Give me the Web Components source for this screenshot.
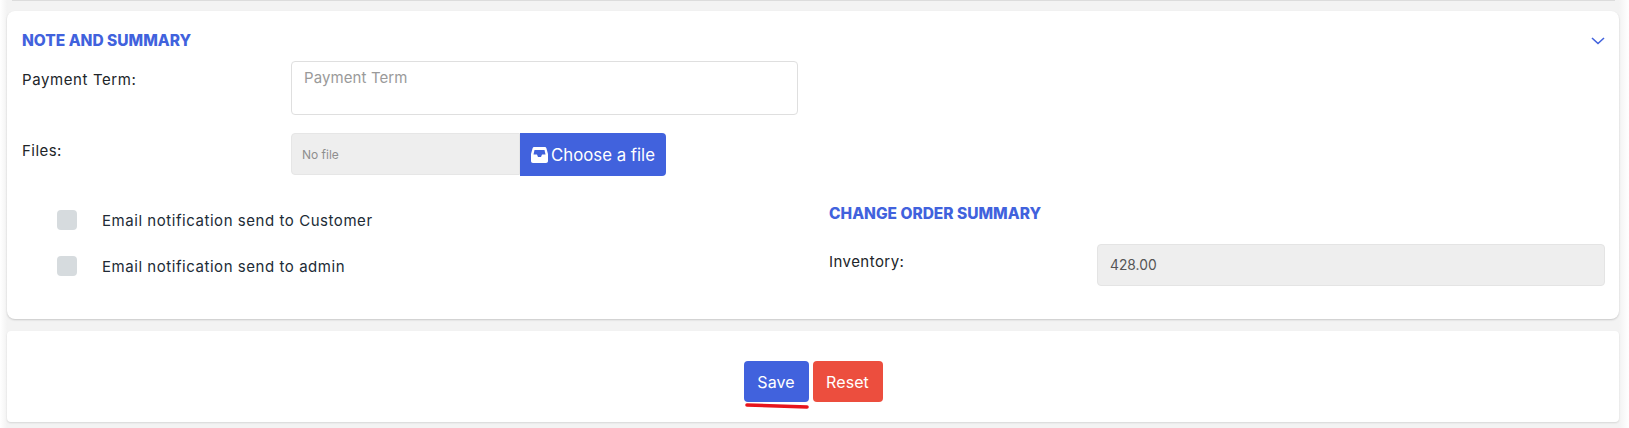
<!DOCTYPE html>
<html>
<head>
<meta charset="utf-8">
<style>
  html, body { margin: 0; height: 428px; overflow: hidden; background: #f3f3f3; }
  body { font-family: Inter, "Open Sans", sans-serif; color: #212529; }
</style>
</head>
<body>
<order-page>
  <note-card>
    <form-row slot="left" label="Payment Term:" style="--label-top:9px;--label-spacing:0.6px"><text-box placeholder="Payment Term"></text-box></form-row>
    <form-row slot="left" label="Files:"><file-pick></file-pick></form-row>
    <check-row slot="checks" label="Email notification send to Customer"></check-row>
    <check-row slot="checks" label="Email notification send to admin"></check-row>
    <form-row slot="summary" label="Inventory:" style="--label-col:268px"><read-box value="428.00"></read-box></form-row>
  </note-card>
  <action-bar></action-bar>
</order-page>

<script>
class OrderPage extends HTMLElement {
    connectedCallback() {
        this.attachShadow({ mode: 'open' }).innerHTML = `
            <style>
                :host {
                    display: block;
                    height: 428px;
                    padding: 0 10px 0 7px;
                    box-sizing: border-box;
                    background: linear-gradient(90deg, #fff 0, #f3f3f3 7px, #f3f3f3 calc(100% - 10px), #fff 100%);
                }
                .top-edge {
                    height: 1px;
                    margin: 0 4px 10px 5px;
                    background: #dcdcdc;
                }
            </style>
            <div class="top-edge"></div>
            <slot></slot>
        `;
    }
}

class NoteCard extends HTMLElement {
    connectedCallback() {
        this.attachShadow({ mode: 'open' }).innerHTML = `
            <style>
                :host {
                    display: block;
                    height: 308px;
                    padding: 20px 14px 0 15px;
                    box-sizing: border-box;
                    background: #fff;
                    border-radius: 8px;
                    box-shadow: 0 1px 2px rgba(0, 0, 0, 0.18);
                }
                .head {
                    display: flex;
                    justify-content: space-between;
                    align-items: center;
                    height: 20px;
                    margin-bottom: 10px;
                }
                h3 {
                    margin: 0;
                    font-size: 15.5px;
                    font-weight: 800;
                    color: #4162dd;
                    line-height: 20px;
                }
                svg { display: block; }
                .left { display: flex; flex-direction: column; gap: 18px; width: 776px; }
                .lower {
                    display: grid;
                    grid-template-columns: 775px 776px;
                    gap: 32px;
                    margin-top: 24px;
                }
                .checks {
                    display: flex;
                    flex-direction: column;
                    gap: 26px;
                    padding: 10px 0 0 35px;
                }
                .summary h3 { margin: 4px 0 20px; }
            </style>
            <div class="head">
                <h3>NOTE AND SUMMARY</h3>
                <svg width="14" height="8" viewBox="0 0 14 8" fill="none" stroke="#4162dd" stroke-width="1.6"><path d="M1 1l6 5.500L13 1"/></svg>
            </div>
            <div class="left"><slot name="left"></slot></div>
            <div class="lower">
                <div class="checks"><slot name="checks"></slot></div>
                <div class="summary">
                    <h3>CHANGE ORDER SUMMARY</h3>
                    <slot name="summary"></slot>
                </div>
            </div>
        `;
    }
}

class FormRow extends HTMLElement {
    connectedCallback() {
        this.attachShadow({ mode: 'open' }).innerHTML = `
            <style>
                :host {
                    display: grid;
                    grid-template-columns: var(--label-col, 269px) 1fr;
                    font-size: 15px;
                    color: #212529;
                }
                label {
                    padding-top: var(--label-top, 8px);
                    line-height: 20px;
                    letter-spacing: var(--label-spacing, 0.45px);
                }
            </style>
            <label>${this.getAttribute('label')}</label>
            <div><slot></slot></div>
        `;
    }
}

class TextBox extends HTMLElement {
    connectedCallback() {
        this.attachShadow({ mode: 'open' }).innerHTML = `
            <style>
                :host {
                    display: block;
                    height: 54px;
                    padding: 6px 12px;
                    box-sizing: border-box;
                    border: 1px solid #dfdfdf;
                    border-radius: 4px;
                    font-size: 15px;
                    letter-spacing: 0.1px;
                    line-height: 20px;
                    color: #9a9a9a;
                }
            </style>
            ${this.getAttribute('placeholder')}
        `;
    }
}

class FilePick extends HTMLElement {
    connectedCallback() {
        this.attachShadow({ mode: 'open' }).innerHTML = `
            <style>
                :host { display: flex; align-items: flex-start; }
                .name {
                    width: 229px;
                    height: 42px;
                    padding-left: 10px;
                    box-sizing: border-box;
                    display: flex;
                    align-items: center;
                    background: #eee;
                    border: 1px solid #e6e6e6;
                    border-radius: 4px 0 0 4px;
                    font-size: 12px;
                    color: #8e8e8e;
                }
                .btn {
                    width: 146px;
                    height: 43px;
                    display: flex;
                    align-items: center;
                    justify-content: center;
                    gap: 3px;
                    background: #4162dd;
                    border-radius: 0 4px 4px 0;
                    color: #fff;
                    font-size: 16.8px;
                }
            </style>
            <div class="name">No file</div>
            <div class="btn">
                <svg width="17" height="16" viewBox="0 0 17 16"><path fill="#fff" fill-rule="evenodd" d="M3.500 0h10c1 0 1.600.5 1.900 1.300L17 7v7c0 1.200-.8 2-2 2H2c-1.200 0-2-.8-2-2V7l1.600-5.700C1.900.5 2.500 0 3.500 0zM3.500 3L2.500 7.500H6l1 2.500h3l1-2.500h3.500L13.500 3z"/></svg>
                <span>Choose a file</span>
            </div>
        `;
    }
}

class CheckRow extends HTMLElement {
    connectedCallback() {
        this.attachShadow({ mode: 'open' }).innerHTML = `
            <style>
                :host {
                    display: flex;
                    align-items: center;
                    gap: 25px;
                    height: 20px;
                    font-size: 15px;
                    letter-spacing: 0.55px;
                    color: #212b36;
                }
                i { width: 20px; height: 20px; border-radius: 4px; background: #d6dbde; }
            </style>
            <i></i><span>${this.getAttribute('label')}</span>
        `;
    }
}

class ReadBox extends HTMLElement {
    connectedCallback() {
        this.attachShadow({ mode: 'open' }).innerHTML = `
            <style>
                :host {
                    display: flex;
                    align-items: center;
                    height: 42px;
                    padding-left: 12px;
                    box-sizing: border-box;
                    background: #eee;
                    border: 1px solid #e4e4e4;
                    border-radius: 4px;
                    font-size: 13.8px;
                    color: #555;
                }
            </style>
            ${this.getAttribute('value')}
        `;
    }
}

class ActionBar extends HTMLElement {
    connectedCallback() {
        this.attachShadow({ mode: 'open' }).innerHTML = `
            <style>
                :host {
                    display: flex;
                    justify-content: center;
                    gap: 4px;
                    height: 91px;
                    margin-top: 12px;
                    padding: 30px 0 0 0;
                    box-sizing: border-box;
                    background: #fff;
                    border-radius: 4px;
                    box-shadow: 0 1px 2px rgba(0, 0, 0, 0.12);
                }
                .btn {
                    position: relative;
                    height: 41px;
                    display: flex;
                    align-items: center;
                    justify-content: center;
                    border-radius: 4px;
                    color: #fff;
                    font-size: 16px;
                    letter-spacing: 0.1px;
                }
                .save { width: 65px; background: #4162dd; }
                .reset { width: 70px; background: #ec4e3e; }
                .mark { position: absolute; left: 1px; top: 42px; }
            </style>
            <div class="btn save">Save
                <svg class="mark" width="64" height="6" viewBox="0 0 64 6"><path d="M2 2l60 2" stroke="#e8141c" stroke-width="3.600" stroke-linecap="round"/></svg>
            </div>
            <div class="btn reset">Reset</div>
        `;
    }
}

customElements.define('order-page', OrderPage);
customElements.define('note-card', NoteCard);
customElements.define('form-row', FormRow);
customElements.define('text-box', TextBox);
customElements.define('file-pick', FilePick);
customElements.define('check-row', CheckRow);
customElements.define('read-box', ReadBox);
customElements.define('action-bar', ActionBar);
</script>
</body>
</html>
